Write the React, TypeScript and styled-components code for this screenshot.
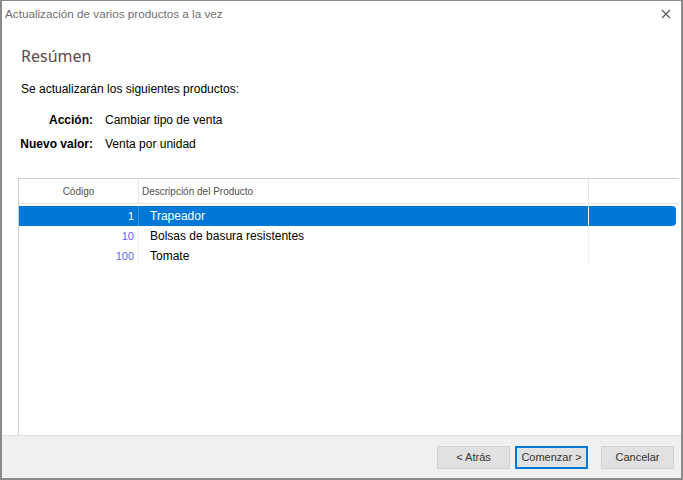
import React from "react";
import styled, { createGlobalStyle } from "styled-components";

const GlobalStyle = createGlobalStyle`
  html, body {
    margin: 0;
    padding: 0;
    background: #ffffff;
  }
  body {
    font-family: "Liberation Sans", Arial, sans-serif;
    font-size: 12px;
    color: #000;
  }
`;

type Product = { code: number; name: string };

const products: Product[] = [
  { code: 1, name: "Trapeador" },
  { code: 10, name: "Bolsas de basura resistentes" },
  { code: 100, name: "Tomate" },
];

const App = () => {
  return (
    <>
      <GlobalStyle />
      <Window>
        <TitleBar>
          <TitleText>Actualización de varios productos a la vez</TitleText>
          <CloseIcon viewBox="0 0 10 10">
            <path d="M1 1 L9 9 M9 1 L1 9" stroke="#555" strokeWidth="1.1" />
          </CloseIcon>
        </TitleBar>
        <Content>
          <Heading>Resúmen</Heading>
          <Intro>Se actualizarán los siguientes productos:</Intro>
          <Details>
            <Label>Acción:</Label>
            <Value>Cambiar tipo de venta</Value>
            <Label>Nuevo valor:</Label>
            <Value>Venta por unidad</Value>
          </Details>
          <ListBox>
            <HeaderRow>
              <HeaderCell $width={120} $center>
                Código
              </HeaderCell>
              <HeaderCell $width={450}>Descripción del Producto</HeaderCell>
              <HeaderFill />
            </HeaderRow>
            {products.map((p, i) => (
              <Row key={p.code} $selected={i === 0}>
                <CodeCell $selected={i === 0}>{p.code}</CodeCell>
                <NameCell>{p.name}</NameCell>
                <FillCell />
              </Row>
            ))}
          </ListBox>
        </Content>
        <Footer>
          <Button>&lt; Atrás</Button>
          <Button $primary>Comenzar &gt;</Button>
          <CancelButton>Cancelar</CancelButton>
        </Footer>
      </Window>
    </>
  );
};

export default App;

const Window = styled.div`
  width: 683px;
  height: 480px;
  box-sizing: border-box;
  border: 1px solid #8a8a8a;
  border-left-width: 2px;
  border-bottom-width: 2px;
  border-right-width: 2px;
  display: flex;
  flex-direction: column;
  background: #fff;
`;

const TitleBar = styled.div`
  height: 25px;
  display: flex;
  align-items: center;
  justify-content: space-between;
  padding: 0 10px 0 3px;
`;

const TitleText = styled.div`
  font-family: "Liberation Sans", Arial, sans-serif;
  font-size: 11.7px;
  color: #707070;
`;

const CloseIcon = styled.svg`
  width: 10px;
  height: 10px;
`;

const Content = styled.div`
  flex: 1;
  display: flex;
  flex-direction: column;
  padding: 0 2px 0 16px;
  min-height: 0;
`;

const Heading = styled.div`
  margin-top: 19px;
  margin-left: 3px;
  font-family: "Noto Sans", sans-serif;
  font-size: 16px;
  color: #5e4b4b;
`;

const Intro = styled.div`
  margin-top: 15px;
  margin-left: 3px;
`;

const Details = styled.div`
  display: grid;
  grid-template-columns: 75px auto;
  column-gap: 12px;
  row-gap: 10px;
  margin-top: 17px;
  align-items: center;
`;

const Label = styled.div`
  font-weight: bold;
  text-align: right;
`;

const Value = styled.div``;

const ListBox = styled.div`
  margin-top: 27px;
  flex: 1;
  border: 1px solid #cfcfcf;
  border-right: none;
  border-bottom: none;
  display: flex;
  flex-direction: column;
`;

const HeaderRow = styled.div`
  display: flex;
  height: 24px;
  border-bottom: 1px solid #e5e5e5;
  margin-bottom: 2px;
`;

const HeaderCell = styled.div<{ $width: number; $center?: boolean }>`
  width: ${(p) => p.$width}px;
  box-sizing: border-box;
  display: flex;
  align-items: center;
  justify-content: ${(p) => (p.$center ? "center" : "flex-start")};
  padding-left: ${(p) => (p.$center ? "0" : "3px")};
  border-right: 1px solid #e5e5e5;
  font-size: 10px;
  color: #505050;
`;

const HeaderFill = styled.div`
  flex: 1;
`;

const Row = styled.div<{ $selected?: boolean }>`
  display: flex;
  height: 20px;
  align-items: stretch;
  background: ${(p) => (p.$selected ? "#0078d7" : "transparent")};
  color: ${(p) => (p.$selected ? "#fff" : "#000")};
  border-radius: 0 4px 4px 0;
  margin-right: 3px;
`;

const CodeCell = styled.div<{ $selected?: boolean }>`
  width: 120px;
  box-sizing: border-box;
  display: flex;
  align-items: center;
  justify-content: flex-end;
  padding-right: 4px;
  border-right: 1px solid ${(p) => (p.$selected ? "#3d8fdc" : "#f0f0f0")};
  color: ${(p) => (p.$selected ? "#fff" : "#6464f0")};
  font-size: 11px;
`;

const NameCell = styled.div`
  width: 450px;
  box-sizing: border-box;
  display: flex;
  align-items: center;
  padding-left: 11px;
  border-right: 1px solid #f0f0f0;
`;

const FillCell = styled.div`
  flex: 1;
`;

const Footer = styled.div`
  height: 42px;
  background: #f0f0f0;
  border-top: 1px solid #dfdfdf;
  display: flex;
  align-items: center;
  justify-content: flex-end;
  padding-right: 7px;
  gap: 5px;
`;

const Button = styled.button<{ $primary?: boolean }>`
  width: 73px;
  height: 23px;
  box-sizing: border-box;
  background: #e1e1e1;
  border: ${(p) => (p.$primary ? "2px solid #0078d7" : "1px solid #d0d0d0")};
  font-family: "Liberation Sans", Arial, sans-serif;
  font-size: 11px;
  color: #333;
  padding: 0;
`;

const CancelButton = styled(Button)`
  margin-left: 8px;
`;
